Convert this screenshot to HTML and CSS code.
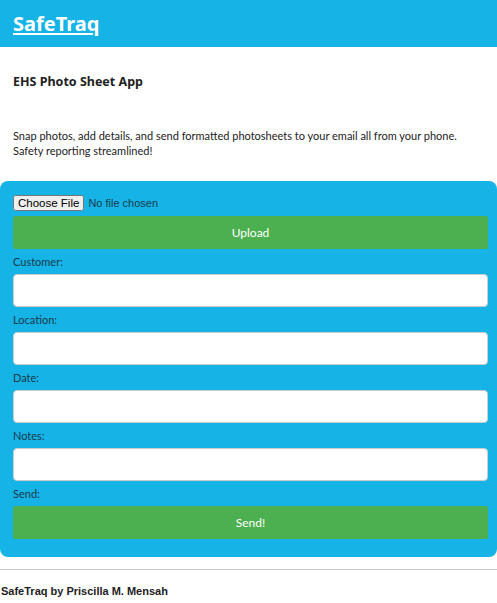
FILE: index.html
```html
<!DOCTYPE html>
<html>
<head>
<meta charset="utf-8">
<link rel="stylesheet" href="styles.css">
</head>
<body>
<header class="top">
  <a class="brand" href="#">SafeTraq</a>
</header>
<main class="main">
  <h1 class="title">EHS Photo Sheet App</h1>
  <p class="intro">Snap photos, add details, and send formatted photosheets to your email all from your phone. Safety reporting streamlined!</p>
  <form class="card">
    <input class="file" type="file">
    <button class="btn" type="button">Upload</button>
    <label class="lbl">Customer:</label>
    <input class="field" type="text">
    <label class="lbl">Location:</label>
    <input class="field" type="text">
    <label class="lbl">Date:</label>
    <input class="field" type="text">
    <label class="lbl">Notes:</label>
    <input class="field" type="text">
    <label class="lbl">Send:</label>
    <button class="btn" type="button">Send!</button>
  </form>
</main>
<footer class="foot">
  <hr class="rule">
  <p class="credit">SafeTraq by Priscilla M. Mensah</p>
</footer>
</body>
</html>
```
FILE: styles.css
```css
* { box-sizing: border-box; }
html, body { margin: 0; padding: 0; background: #fff; }
body { font-family: "Lato", "Noto Sans", sans-serif; color: #222; overflow: hidden; }
.top { background: #16b3e6; height: 47px; padding: 0 13px; display: flex; align-items: center; }
.brand { font-family: "Noto Sans", sans-serif; color: #fff; font-weight: bold; font-size: 20px; text-decoration: underline; text-decoration-thickness: 2px; text-underline-offset: 2px; }
.main { display: flex; flex-direction: column; }
.title { font-family: "Noto Sans", sans-serif; font-size: 12.5px; font-weight: bold; margin: 26px 13px 0; line-height: 18px; color: #222; }
.intro { font-size: 11px; line-height: 15px; margin: 37px 13px 0; color: #222; }
.card { background: #16b3e6; margin-top: 23px; border-radius: 8px; padding: 14px 9px 18px 13px; display: flex; flex-direction: column; }
.file { font-family: "Liberation Sans", Arial, sans-serif; font-size: 11px; color: #1a3a4a; height: 16px; }
.file::file-selector-button { font-family: "Liberation Sans", Arial, sans-serif; font-size: 11.5px; margin-right: 4px; padding: 0 3px; height: 16px; }
.btn { margin-top: 5px; height: 33px; background: #4caf50; color: #fff; border: none; border-radius: 2px; font-family: inherit; font-size: 12px; }
.lbl { font-size: 11px; color: #1a3a4a; line-height: 17px; padding: 4px 0; }
.field { height: 33px; border: 1px solid #ccc; border-radius: 4px; background: #fff; }
.lbl + .btn { margin-top: 0; }
.foot { padding: 0; }
.rule { border: none; border-top: 1px solid #ccc; margin: 12px 0 0; }
.credit { font-family: "Liberation Sans", Arial, sans-serif; font-weight: bold; font-size: 11px; margin: 15px 1px 0; color: #222; }
```
